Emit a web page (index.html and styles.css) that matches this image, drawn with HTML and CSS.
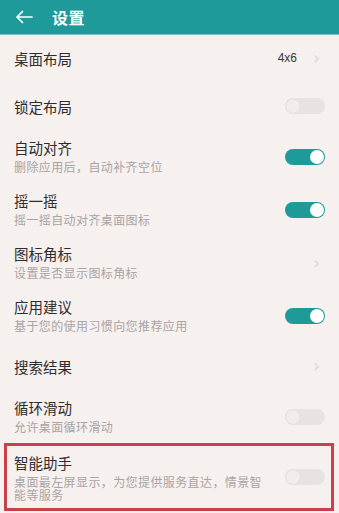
FILE: index.html
```html
<!DOCTYPE html>
<html lang="zh-CN">
<head>
<meta charset="utf-8">
<title>设置</title>
<link rel="stylesheet" href="styles.css">
</head>
<body>
<div class="screen">
  <header class="appbar">
    <svg class="back" viewBox="0 0 18 14" width="18" height="14">
      <path d="M17 7H2M7.5 1.5L2 7l5.5 5.5" fill="none" stroke="#fff" stroke-width="1.7" stroke-linecap="round" stroke-linejoin="round"/>
    </svg>
    <h1 class="title">设置</h1>
  </header>
  <ul class="list">
    <li class="row single">
      <div class="text"><div class="label">桌面布局</div></div>
      <span class="value">4x6</span>
      <span class="chev">›</span>
    </li>
    <li class="row single">
      <div class="text"><div class="label">锁定布局</div></div>
      <span class="switch"><span class="knob"></span></span>
    </li>
    <li class="row double">
      <div class="text"><div class="label">自动对齐</div><div class="sub">删除应用后，自动补齐空位</div></div>
      <span class="switch on"><span class="knob"></span></span>
    </li>
    <li class="row double">
      <div class="text"><div class="label">摇一摇</div><div class="sub">摇一摇自动对齐桌面图标</div></div>
      <span class="switch on"><span class="knob"></span></span>
    </li>
    <li class="row double">
      <div class="text"><div class="label">图标角标</div><div class="sub">设置是否显示图标角标</div></div>
      <span class="chev">›</span>
    </li>
    <li class="row double">
      <div class="text"><div class="label">应用建议</div><div class="sub">基于您的使用习惯向您推荐应用</div></div>
      <span class="switch on"><span class="knob"></span></span>
    </li>
    <li class="row single">
      <div class="text"><div class="label">搜索结果</div></div>
      <span class="chev">›</span>
    </li>
    <li class="row double">
      <div class="text"><div class="label">循环滑动</div><div class="sub">允许桌面循环滑动</div></div>
      <span class="switch"><span class="knob"></span></span>
    </li>
    <li class="row highlight">
      <div class="text"><div class="label">智能助手</div><div class="sub multi">桌面最左屏显示，为您提供服务直达，情景智能等服务</div></div>
      <span class="switch"><span class="knob"></span></span>
    </li>
  </ul>
</div>
</body>
</html>
```
FILE: styles.css
```css
* { box-sizing: border-box; }
html, body { margin: 0; padding: 0; }
body {
  width: 339px;
  height: 513px;
  overflow: hidden;
  background: #f6f0ef;
  font-family: "Noto Sans CJK SC", "Noto Sans", sans-serif;
}
.screen { display: flex; flex-direction: column; }
.appbar {
  height: 34px;
  background: #1e9a9a;
  display: flex;
  align-items: center;
  padding-left: 15px;
  box-shadow: 0 1px 0 #7cc4c2;
}
.back { display: block; margin-right: 19px; }
.title {
  margin: 0;
  color: #fff;
  font-size: 16px;
  font-weight: 700;
  line-height: 20px;
  letter-spacing: 0.5px;
}
.list { list-style: none; margin: 0; padding: 0; }
.row {
  display: flex;
  align-items: center;
  padding: 0 14px;
}
.row.single { height: 48px; }
.row.double { height: 53px; }
.row.highlight {
  height: 68px;
  margin: 0 5px 0 4px;
  border: 3px solid #c8414b;
  padding: 0 6px 0 7px;
}
.text { flex: 1; min-width: 0; padding-right: 16px; }
.label {
  font-size: 14.5px;
  line-height: 19px;
  color: #2e2c2c;
}
.sub {
  font-size: 12px;
  line-height: 16px;
  margin-top: 2px;
  letter-spacing: 0.4px;
  color: #a9a4a4;
}
.sub.multi { line-height: 13px; margin-top: 3px; }
.value {
  font-size: 12px;
  color: #3a3838;
  margin-right: 16px;
  font-family: "Liberation Sans", sans-serif;
}
.chev {
  font-family: "DejaVu Sans", sans-serif;
  font-size: 18px;
  line-height: 18px;
  color: #dcd6d6;
  width: 10px;
  margin-right: 2px;
}
.switch {
  width: 40px;
  height: 16px;
  border-radius: 8px;
  background: #e8e3e3;
  position: relative;
  flex: none;
}
.knob {
  position: absolute;
  top: 1px;
  left: 1px;
  width: 14px;
  height: 14px;
  border-radius: 50%;
  background: #f1eded;
  box-shadow: 0 0 1px rgba(0,0,0,0.12);
}
.switch.on { background: #1e9a98; }
.switch.on .knob {
  left: auto;
  right: 1px;
  background: #fff;
  box-shadow: none;
}
```
